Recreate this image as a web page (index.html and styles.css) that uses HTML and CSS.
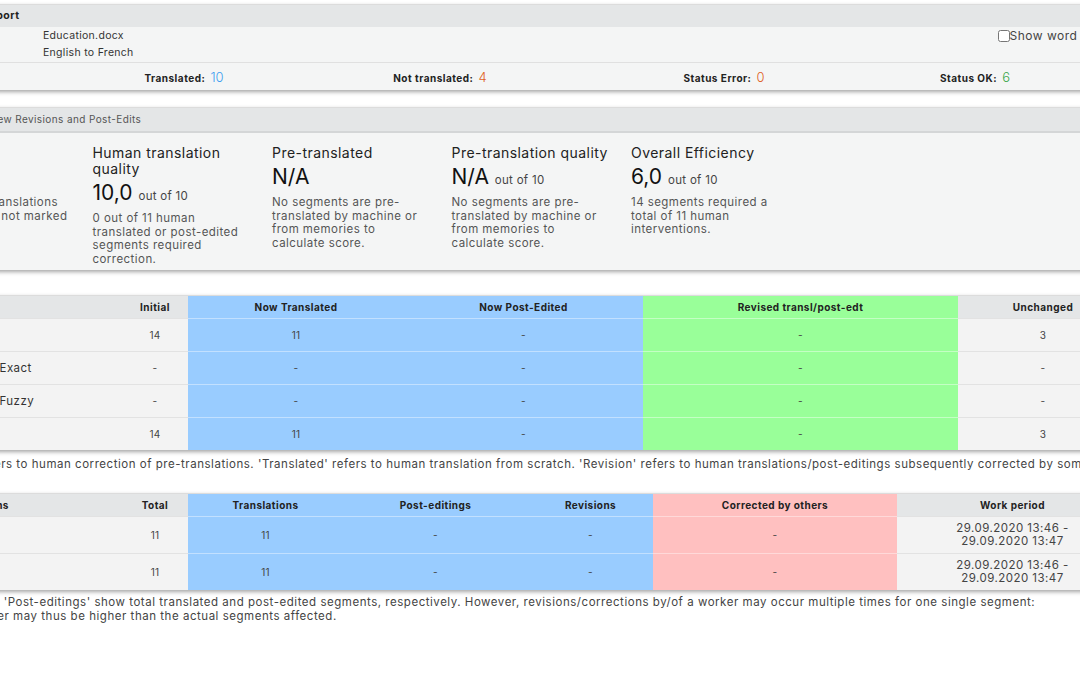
FILE: index.html
```html
<!DOCTYPE html>
<html lang="en">
<head>
<meta charset="utf-8">
<title>Translation Report</title>
<link rel="stylesheet" href="styles.css">
</head>
<body>
<div class="page">

  <section class="card">
    <div class="card-head bold">Translation Report</div>
    <div class="info">
      <div class="info-rows">
        <div class="info-row"><span class="lbl">File:</span><span>Education.docx</span></div>
        <div class="info-row"><span class="lbl">Languages:</span><span>English to French</span></div>
      </div>
      <label class="toggle"><input type="checkbox">Show word count</label>
    </div>
    <div class="stats">
      <div class="stat"></div>
      <div class="stat"><b>Translated:</b> <span class="v blue">10</span></div>
      <div class="stat"><b>Not translated:</b> <span class="v orange">4</span></div>
      <div class="stat"><b>Status Error:</b> <span class="v orange">0</span></div>
      <div class="stat"><b>Status OK:</b> <span class="v green">6</span></div>
    </div>
  </section>

  <section class="card card-2">
    <div class="card-head">Quality Overview Revisions and Post-Edits</div>
    <div class="metrics">
      <div class="metric metric-first">
        <div class="m-title">Marked</div>
        <div class="m-num">0</div>
        <div class="m-desc">Human translations<br>were still not marked</div>
      </div>
      <div class="metric">
        <div class="m-title">Human translation quality</div>
        <div class="m-num">10,0 <small>out of 10</small></div>
        <div class="m-desc">0 out of 11 human translated or post-edited segments required correction.</div>
      </div>
      <div class="metric">
        <div class="m-title">Pre-translated</div>
        <div class="m-num">N/A</div>
        <div class="m-desc">No segments are pre-translated by machine or from memories to calculate score.</div>
      </div>
      <div class="metric">
        <div class="m-title">Pre-translation quality</div>
        <div class="m-num">N/A <small>out of 10</small></div>
        <div class="m-desc">No segments are pre-translated by machine or from memories to calculate score.</div>
      </div>
      <div class="metric">
        <div class="m-title">Overall Efficiency</div>
        <div class="m-num">6,0 <small>out of 10</small></div>
        <div class="m-desc">14 segments required a total of 11 human interventions.</div>
      </div>
    </div>
  </section>

  <section class="card card-3">
    <table class="grid t1">
      <colgroup>
        <col class="c-lbl"><col class="c-ini"><col class="c-nt"><col class="c-npe"><col class="c-rev"><col class="c-unc">
      </colgroup>
      <thead>
        <tr><th class="lbl-cell">Segments</th><th>Initial</th><th class="b">Now Translated</th><th class="b">Now Post-Edited</th><th class="g">Revised transl/post-edt</th><th>Unchanged</th></tr>
      </thead>
      <tbody>
        <tr><td class="lbl-cell">Untranslated</td><td>14</td><td class="b">11</td><td class="b">-</td><td class="g">-</td><td>3</td></tr>
        <tr><td class="lbl-cell">Pre-translated Exact</td><td>-</td><td class="b">-</td><td class="b">-</td><td class="g">-</td><td>-</td></tr>
        <tr><td class="lbl-cell">Pre-translated Fuzzy</td><td>-</td><td class="b">-</td><td class="b">-</td><td class="g">-</td><td>-</td></tr>
        <tr><td class="lbl-cell">Total</td><td>14</td><td class="b">11</td><td class="b">-</td><td class="g">-</td><td>3</td></tr>
      </tbody>
    </table>
  </section>
  <p class="note note-1">'Post-edited' refers to human correction of pre-translations. 'Translated' refers to human translation from scratch. 'Revision' refers to human translations/post-editings subsequently corrected by someone else.</p>

  <section class="card card-4">
    <table class="grid t2">
      <colgroup>
        <col class="c-lbl"><col class="c-ini"><col class="c-tr"><col class="c-pe"><col class="c-rv"><col class="c-cb"><col class="c-wp">
      </colgroup>
      <thead>
        <tr><th class="lbl-cell">Workers/Sessions</th><th>Total</th><th class="b">Translations</th><th class="b">Post-editings</th><th class="b">Revisions</th><th class="p">Corrected by others</th><th>Work period</th></tr>
      </thead>
      <tbody>
        <tr><td class="lbl-cell">Translator</td><td>11</td><td class="b">11</td><td class="b">-</td><td class="b">-</td><td class="p">-</td><td class="period">29.09.2020 13:46 -<br>29.09.2020 13:47</td></tr>
        <tr><td class="lbl-cell">Total</td><td>11</td><td class="b">11</td><td class="b">-</td><td class="b">-</td><td class="p">-</td><td class="period">29.09.2020 13:46 -<br>29.09.2020 13:47</td></tr>
      </tbody>
    </table>
  </section>
  <p class="note note-2">'Translations' and 'Post-editings' show total translated and post-edited segments, respectively. However, revisions/corrections by/of a worker may occur multiple times for one single segment:<br>so the total number may thus be higher than the actual segments affected.</p>

</div>
</body>
</html>
```

FILE: styles.css
```css
html, body {
  margin: 0;
  padding: 0;
  background: #ffffff;
  overflow: hidden;
}
body {
  font-family: Inter, "Open Sans", "DejaVu Sans", sans-serif;
  color: #444;
  font-size: 11px;
}
.page {
  width: 1230px;
  margin-left: -100px;
  padding-top: 4px;
}
.bold { font-weight: 700; }

.card {
  background: #f4f5f5;
  border-top: 1px solid #dcdcdc;
  box-shadow: 0 2px 4px rgba(0, 0, 0, 0.35);
}
.card-head {
  height: 22px;
  line-height: 22px;
  padding-left: 16px;
  background: #e4e6e7;
  color: #222;
  font-size: 10px;
  letter-spacing: 0.4px;
}
.card-head.bold { font-size: 10.5px; letter-spacing: 0.5px; }

/* info block */
.info {
  display: flex;
  justify-content: space-between;
  align-items: flex-start;
  border-bottom: 1px solid #e0e0e0;
  padding-bottom: 1px;
}
.info-row {
  display: flex;
  line-height: 17px;
  font-size: 10.5px;
  letter-spacing: 0.3px;
  color: #333;
}
.lbl {
  width: 133px;
  padding-left: 10px;
}
.toggle {
  display: flex;
  align-items: center;
  font-size: 12px;
  letter-spacing: 0.5px;
  color: #444;
  padding: 1px 14px 0 0;
}
.toggle input {
  margin: 0;
  width: 12px;
  height: 12px;
}

/* stats */
.stats {
  display: grid;
  grid-template-columns: 156px 256px 256px 312px 190px;
  height: 27px;
  align-items: center;
  justify-items: center;
}
.stat b {
  font-size: 10px;
  letter-spacing: 0.5px;
  color: #222;
}
.v {
  font-size: 13px;
  font-weight: 300;
  margin-left: 2px;
}
.blue { color: #3d9ef0; }
.orange { color: #df5f24; }
.green { color: #3aa64a; }

/* metrics */
.card-2 { margin-top: 17px; }
.card-2 .card-head {
  height: 23px;
  line-height: 23px;
  padding-left: 25px;
  color: #555;
  border-bottom: 2px solid #d4d6d7;
}
.metrics {
  display: grid;
  grid-template-columns: repeat(5, 179.5px);
  padding: 12px 13px 3px;
}
.metric { padding-right: 18px; }
.metric-first { padding-left: 32px; padding-right: 0; }
.m-title {
  font-size: 14px;
  line-height: 16px;
  letter-spacing: 0.45px;
  color: #222;
}
.m-num {
  font-size: 21px;
  line-height: 28px;
  margin-top: 2px;
  height: 33px;
  color: #111;
}
.m-num small {
  font-size: 11.5px;
  letter-spacing: 0.3px;
  color: #444;
}
.m-desc {
  font-size: 11.5px;
  line-height: 13.7px;
  letter-spacing: 0.45px;
  padding-right: 10px;
  color: #555;
}
.metric-first .m-desc { padding-right: 0; }

/* tables */
.card-3 { margin-top: 25px; background: #f3f3f3; }
.card-4 { margin-top: 22px; background: #f3f3f3; }
.grid {
  width: 1228px;
  table-layout: fixed;
  border-collapse: collapse;
  font-size: 10px;
}
.c-lbl { width: 222px; }
.c-ini { width: 66px; }
.c-nt { width: 216px; }
.c-npe { width: 239px; }
.c-rev { width: 315px; }
.c-unc { width: 170px; }
.c-tr { width: 155px; }
.c-pe { width: 185px; }
.c-rv { width: 125px; }
.c-cb { width: 244px; }
.c-wp { width: 231px; }
.grid th {
  height: 22px;
  padding: 0;
  background: #e4e6e7;
  color: #222;
  font-weight: 700;
  letter-spacing: 0.45px;
  text-align: center;
}
.grid td {
  height: 32px;
  padding: 0;
  text-align: center;
  color: #444;
  letter-spacing: 0.3px;
  border-top: 1px solid #e2e2e2;
}
.t2 td { height: 36px; }
.grid td.period {
  font-size: 11.5px;
  line-height: 13.7px;
  letter-spacing: 0.45px;
}
.grid .lbl-cell {
  text-align: left;
  padding-left: 12px;
  font-size: 11.5px;
  letter-spacing: 0.45px;
  font-weight: 400;
  color: #333;
}
.grid th.lbl-cell { font-weight: 700; font-size: 10px; color: #222; }
.grid .b { background: #99ccff; border-top-color: #c2e0ff; }
.grid .g { background: #99ff99; border-top-color: #c4ffc4; }
.grid .p { background: #ffc0c0; border-top-color: #ffd9d9; }

.note {
  margin: 8px 0 0 -3px;
  padding-left: 0;
  font-size: 11.5px;
  line-height: 13.5px;
  letter-spacing: 0.53px;
  color: #444;
  white-space: nowrap;
}
.note-2 { margin: 6px 0 0 -6px; }
```
